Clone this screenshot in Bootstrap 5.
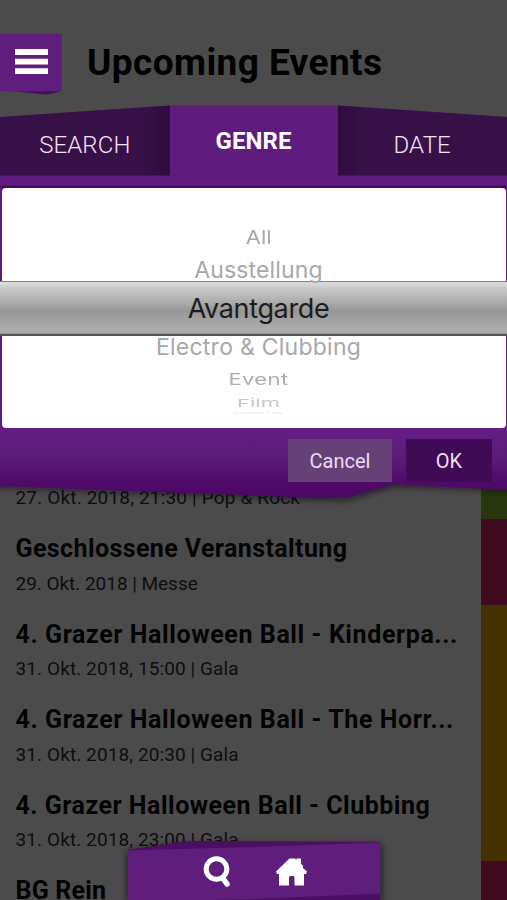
<!DOCTYPE html>
<html lang="de">
<head>
<meta charset="utf-8">
<meta name="viewport" content="width=device-width, initial-scale=1">
<title>Upcoming Events</title>
<link href="https://cdn.jsdelivr.net/npm/bootstrap@5.3.0/dist/css/bootstrap.min.css" rel="stylesheet">
<style>
  body { background: #4b4b4b; color: #000; font-family: Roboto, "Liberation Sans", sans-serif; }
  .app { width: 507px; height: 900px; }
  .fit { display: inline-block; white-space: nowrap; flex-shrink: 0; }
  .app-header { height: 105px; padding-top: 34px; }
  .menu-btn { width: 62px; height: 61px; }
  .app-title { font-size: 37px; font-weight: 700; line-height: 57px; margin-left: 25px; letter-spacing: .4px; }
  .event-list { margin-top: 328.5px; }
  .event-row { height: 85.6px; background: linear-gradient(90deg, #484848, #484848) 16px 100% / 450px 1px no-repeat; }
  .event-text { padding: 13px 0 0 15.5px; }
  .event-name { font-size: 25px; font-weight: 700; line-height: 34px; color: #030303; letter-spacing: .6px; }
  .event-name .n1 { letter-spacing: .4px; }
  .event-name .n4 { letter-spacing: .5px; }
  .event-name .n5 { letter-spacing: .2px; }
  .event-meta { font-size: 19px; line-height: 24px; margin-top: 5.5px; color: #0d0d0d; letter-spacing: .1px; }
  .event-meta .m0 { letter-spacing: .17px; }
  .event-meta .m1 { letter-spacing: -.03px; }
  .stripe { width: 26.5px; }
  .stripe-green { background: #27360d; }
  .stripe-red { background: #400b1e; }
  .stripe-gold { background: #453000; }
  .dialog-layer { top: 105px; height: 405px; }
  .dialog-layer > svg, .dock > svg { left: 0; top: 0; }
  .tab-strip { height: 82.5px; color: #f3e4f8; font-size: 24px; font-weight: 300; }
  .tab-item { width: 170px; padding-top: 22px; line-height: 37px; }
  .tab-item.current { width: 168px; color: #fff; font-weight: 700; padding-top: 18px; }
  .tab-item .fit { letter-spacing: .1px; }
  .picker { height: 240.5px; margin: 0 1px 0 2px; padding-top: 34px; background: #fff; border-radius: 4px; font-family: Inter, "Liberation Sans", sans-serif; color: #a8a8a8; }
  .picker-row { display: flex; justify-content: center; align-items: center; width: 100%; padding-left: 9px; position: relative; z-index: 2; }
  .picker-row .fit { line-height: 30px; }
  .picker-row .p1 { font-size: 20px; transform: scale(1.1, .95); }
  .picker-row .p2 { font-size: 23px; letter-spacing: .15px; }
  .picker-row .p3 { font-size: 27px; letter-spacing: -.35px; color: #1c1c1c; }
  .picker-row .p4 { font-size: 23px; letter-spacing: .25px; }
  .picker-row .p5 { font-size: 22px; letter-spacing: .4px; color: #aeaeae; transform: scale(1, .75); }
  .picker-row .p6 { font-size: 22px; color: #c8c8c8; transform: scale(1, .5); }
  .picker-row .p7 { font-size: 15px; color: #e6e6e6; transform: scale(1, .15); }
  .band { left: 0; right: 0; top: 176px; height: 55px; border-top: 1px solid #818181; border-bottom: 2px solid #555;
    background: linear-gradient(#d8d8d8 0, #d8d8d8 2px, #cdcdcd 5px, #b2b2b2 17px, #a3a3a3 24px, #969696 29px, #a2a2a2 38px, #acacac 48px, #aaa 51px, #888 52px); }
  .actions { padding: 11px 15px 0 0; gap: 14px; }
  .act { height: 43px; border: 0; border-radius: 1px; font-size: 20px; padding: 0; color: #eedcf4; line-height: 45px; }
  .act-cancel { width: 104px; background: #664177; }
  .act-ok { width: 86px; background: #3f0b54; }
  .dock { left: 116px; top: 832px; width: 276px; height: 68px; z-index: 3; }
  .dock-icons { padding: 24px 0 0 86px; gap: 42px; }
</style>
</head>
<body>
<div class="app position-relative overflow-hidden">
  <header class="app-header d-flex align-items-start">
    <svg class="menu-btn flex-shrink-0" viewBox="0 0 62 61">
      <path d="M0 56L46 60.5Q50 60.5 61 57V52H0Z" fill="#43105e"/>
      <path d="M0 0H60.5Q62 0 62 1.5V57L12 57.8L0 57Z" fill="#601e7c"/>
      <path d="M15 15H48V21H15ZM15 24.7H48V30.5H15ZM15 34.3H48V40H15Z" fill="#fff"/>
    </svg>
    <h1 class="app-title mb-0"><span class="fit">Upcoming Events</span></h1>
  </header>

  <main class="event-list">
    <div class="event-row d-flex justify-content-between">
      <div class="event-text"><div class="event-name">&nbsp;</div><div class="event-meta"><span class="fit m0">27. Okt. 2018, 21:30 | Pop &amp; Rock</span></div></div>
      <div class="stripe stripe-green"></div>
    </div>
    <div class="event-row d-flex justify-content-between">
      <div class="event-text"><div class="event-name"><span class="fit n1">Geschlossene Veranstaltung</span></div><div class="event-meta"><span class="fit m1">29. Okt. 2018 | Messe</span></div></div>
      <div class="stripe stripe-red"></div>
    </div>
    <div class="event-row d-flex justify-content-between">
      <div class="event-text"><div class="event-name"><span class="fit">4. Grazer Halloween Ball - Kinderpa...</span></div><div class="event-meta"><span class="fit">31. Okt. 2018, 15:00 | Gala</span></div></div>
      <div class="stripe stripe-gold"></div>
    </div>
    <div class="event-row d-flex justify-content-between">
      <div class="event-text"><div class="event-name"><span class="fit">4. Grazer Halloween Ball - The Horr...</span></div><div class="event-meta"><span class="fit">31. Okt. 2018, 20:30 | Gala</span></div></div>
      <div class="stripe stripe-gold"></div>
    </div>
    <div class="event-row d-flex justify-content-between">
      <div class="event-text"><div class="event-name"><span class="fit n4">4. Grazer Halloween Ball - Clubbing</span></div><div class="event-meta"><span class="fit">31. Okt. 2018, 23:00 | Gala</span></div></div>
      <div class="stripe stripe-gold"></div>
    </div>
    <div class="event-row d-flex justify-content-between">
      <div class="event-text"><div class="event-name"><span class="fit n5">BG Rein</span></div></div>
      <div class="stripe stripe-red"></div>
    </div>
  </main>

  <section class="dialog-layer position-absolute start-0 w-100">
    <svg class="position-absolute" width="507" height="405" viewBox="0 0 507 405">
      <defs>
        <linearGradient id="foot" x1="0" y1="0" x2="0" y2="1"><stop offset="0" stop-color="#661d87"/><stop offset=".45" stop-color="#5a1b76"/><stop offset=".8" stop-color="#4e0969"/><stop offset="1" stop-color="#4b0666"/></linearGradient>
        <linearGradient id="tabL"><stop offset="0" stop-color="#371047"/><stop offset=".85" stop-color="#371047"/><stop offset="1" stop-color="#2f0b3e"/></linearGradient>
        <linearGradient id="tabR"><stop offset="0" stop-color="#2f0b3e"/><stop offset=".15" stop-color="#371047"/><stop offset="1" stop-color="#371047"/></linearGradient>
        <filter id="soft" x="-10%" y="-50%" width="120%" height="200%"><feGaussianBlur stdDeviation="3"/></filter>
      </defs>
      <path d="M-10 340H517V386L395 381L347 395Q300 395 253 392L-10 382Z" fill="#160a1a" opacity=".75" filter="url(#soft)"/>
      <path d="M0 12L170 .5H338L507 12V330H0Z" fill="#601b7e"/>
      <path d="M0 12L170 .5V70.500H0Z" fill="url(#tabL)"/>
      <path d="M338 .5L507 12V70.500H338Z" fill="url(#tabR)"/>
      <path d="M0 80.5H507V83H0Z" fill="#440b5c"/>
      <path d="M0 322H507V385L393 379L350 391.5Q340 393 322 393L253 390.5L0 381Z" fill="url(#foot)"/>
    </svg>
    <nav class="tab-strip d-flex text-center position-relative">
      <div class="tab-item"><span class="fit">SEARCH</span></div>
      <div class="tab-item current"><span class="fit">GENRE</span></div>
      <div class="tab-item"><span class="fit">DATE</span></div>
    </nav>
    <div class="picker position-relative overflow-hidden">
      <div class="picker-row" style="height:31px"><span class="fit p1">All</span></div>
      <div class="picker-row" style="height:35px"><span class="fit p2">Ausstellung</span></div>
      <div class="picker-row" style="height:42px"><span class="fit p3">Avantgarde</span></div>
      <div class="picker-row" style="height:34px"><span class="fit p4">Electro &amp; Clubbing</span></div>
      <div class="picker-row" style="height:31px"><span class="fit p5">Event</span></div>
      <div class="picker-row" style="height:16px"><span class="fit p6">Film</span></div>
      <div class="picker-row" style="height:4px"><span class="fit p7">Galerie</span></div>
    </div>
    <div class="band position-absolute"></div>
    <div class="actions d-flex justify-content-end position-relative">
      <button class="act act-cancel"><span class="fit">Cancel</span></button>
      <button class="act act-ok"><span class="fit">OK</span></button>
    </div>
  </section>

  <nav class="dock position-absolute">
    <svg class="position-absolute" width="276" height="68" viewBox="0 0 276 68">
      <defs><filter id="soft2"><feGaussianBlur stdDeviation="3"/></filter></defs>
      <path d="M11 19L70 12L266 12V70H11Z" fill="#111" opacity=".65" filter="url(#soft2)"/>
      <path d="M12 18L48 12.5Q65 9 80 9L264 10V68H12Z" fill="#4a0f65"/>
      <path d="M12 18.5L138 15L264 10.500V61.5L138 67L90 68H12Z" fill="#601e7c"/>
    </svg>
    <div class="dock-icons d-flex position-relative">
      <svg width="32" height="32" viewBox="0 0 32 32"><circle cx="14.500" cy="13" r="10.300" fill="none" stroke="#fff" stroke-width="5"/><path d="M21 22.500L25 28" stroke="#fff" stroke-width="5.500" stroke-linecap="round"/></svg>
      <svg width="32" height="32" viewBox="0 0 32 32"><path d="M0 15.500L13.500 2.500H19L20.500 4V2.500H25V7.500L27 10V12L31 15.500L30 18H28V29.500H18.500V22Q18.500 20 17 20H14.500Q13 20 13 22V29.500H3V18H1Z" fill="#fff"/></svg>
    </div>
  </nav>
</div>
</body>
</html>
